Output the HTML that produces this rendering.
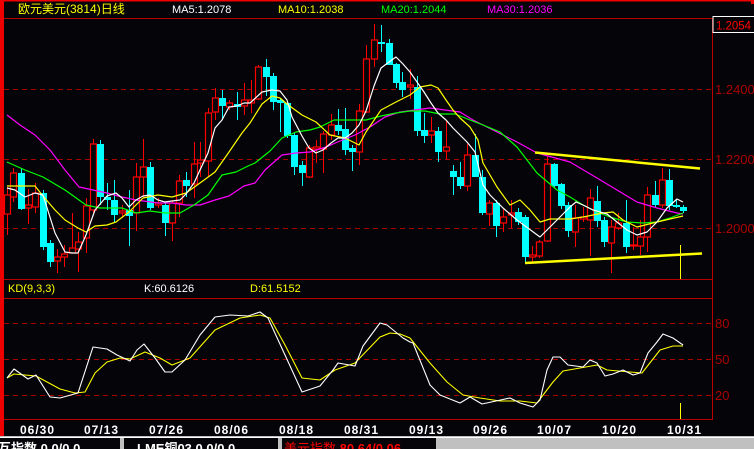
<!DOCTYPE html>
<html><head><meta charset="utf-8"><style>
html,body{margin:0;padding:0;background:#050408;width:754px;height:449px;overflow:hidden}
svg{display:block}
text{font-family:"Liberation Sans","Noto Sans CJK SC",sans-serif}
</style></head><body>
<svg width="754" height="449" viewBox="0 0 754 449" xmlns="http://www.w3.org/2000/svg">
<rect width="754" height="449" fill="#050408"/>
<rect x="0" y="0" width="754" height="1.5" fill="#e00"/>
<rect x="0" y="0" width="4" height="437" fill="#e00"/>
<rect x="751" y="0" width="3" height="4" fill="#e00"/>
<line x1="4" y1="18.5" x2="754" y2="18.5" stroke="#b00" stroke-width="1"/>
<line x1="712.5" y1="18" x2="712.5" y2="420" stroke="#b00"/>
<line x1="4" y1="279.5" x2="712" y2="279.5" stroke="#b00"/>
<line x1="4" y1="298.5" x2="712" y2="298.5" stroke="#b00"/>
<line x1="4" y1="419.5" x2="712" y2="419.5" stroke="#b00"/>
<text x="18" y="13" font-size="12" fill="#ff0">欧元美元(3814)日线</text>
<text x="172" y="13" font-size="11" fill="#fff">MA5:1.2078</text>
<text x="278" y="13" font-size="11" fill="#ff0">MA10:1.2038</text>
<text x="381" y="13" font-size="11" fill="#0f0">MA20:1.2044</text>
<text x="487" y="13" font-size="11" fill="#f0f">MA30:1.2036</text>
<rect x="713" y="16.5" width="42" height="16" fill="#050408" stroke="#fff" stroke-width="1"/>
<text x="716" y="29.5" font-size="12" fill="#f00" textLength="35" lengthAdjust="spacingAndGlyphs">1.2054</text>
<g stroke="#a00" stroke-dasharray="5,4" stroke-width="1">
<line x1="4" y1="89.5" x2="712" y2="89.5"/>
<line x1="4" y1="159.5" x2="712" y2="159.5"/>
<line x1="4" y1="228.5" x2="712" y2="228.5"/>
<line x1="4" y1="323.5" x2="712" y2="323.5"/>
<line x1="4" y1="359.5" x2="712" y2="359.5"/>
<line x1="4" y1="395.5" x2="712" y2="395.5"/>
</g>
<g font-size="13" fill="#a00">
<text x="715" y="94">1.2400</text>
<text x="715" y="164">1.2200</text>
<text x="715" y="233">1.2000</text>
<text x="715" y="328">80</text>
<text x="715" y="364">50</text>
<text x="715" y="400">20</text>
</g>
<path stroke="#f00" stroke-width="1" fill="none" d="M7.5 187V235M13.5 168V202M28.5 189V224M35.5 183V213M57.5 249V273M64.5 245V267M72.5 213V253M78.5 232V272M86.5 198V253M93.5 139V213M122.5 205V218M136.5 163V231M143.5 139V197M158.5 198V208M172.5 200V241M179.5 175V217M194.5 142V198M200.5 142V177M208.5 108V177M215.5 88V120M229.5 100V110M244.5 83V115M251.5 80V113M258.5 65V100M309.5 145V178M316.5 140V163M323.5 131V173M331.5 114V140M359.5 104V165M366.5 45V113M374.5 24V67M410.5 69V99M431.5 117V143M446.5 120V159M467.5 144V191M489.5 200V226M503.5 208V232M511.5 200V228M532.5 246V262M539.5 240V258M547.5 156V242M575.5 205V247M583.5 207V222M590.5 189V256M611.5 220V273M618.5 213V230M633.5 227V250M640.5 220V255M647.5 187V252M662.5 168V208"/>
<path stroke="#0ff" stroke-width="1" fill="none" d="M21.5 168V210M43.5 190V250M50.5 240V267M100.5 140V205M107.5 183V210M114.5 180V222M129.5 190V246M150.5 162V210M165.5 202V236M186.5 172V197M222.5 90V120M237.5 92V120M266.5 59V96M273.5 73V110M280.5 98V132M287.5 102V138M294.5 133V175M302.5 161V186M338.5 109V135M345.5 108V155M352.5 145V171M381.5 25V52M389.5 39V65M396.5 63V88M402.5 72V97M417.5 76V136M424.5 113V143M438.5 127V162M453.5 165V195M460.5 162V189M475.5 134V177M482.5 170V215M496.5 200V237M518.5 208V225M525.5 215V263M554.5 163V188M561.5 183V209M568.5 202V237M597.5 186V227M604.5 217V247M626.5 200V253M655.5 181V208M669.5 169V210M676.5 200V208M683.5 205V213"/>
<g stroke="#f00" stroke-width="1.2" fill="#050408">
<rect x="4.5" y="195" width="6" height="19"/><rect x="10.5" y="173" width="6" height="24"/><rect x="25.5" y="205" width="6" height="3"/><rect x="32.5" y="193" width="6" height="14"/><rect x="54.5" y="257" width="6" height="4"/><rect x="61.5" y="254" width="6" height="3"/><rect x="69.5" y="248" width="6" height="5"/><rect x="75.5" y="242" width="6" height="7"/><rect x="83.5" y="206" width="6" height="32"/><rect x="90.5" y="144" width="6" height="66"/><rect x="119.5" y="211" width="6" height="2"/><rect x="133.5" y="177" width="6" height="36"/><rect x="140.5" y="167" width="6" height="10"/><rect x="155.5" y="203" width="6" height="2"/><rect x="169.5" y="203" width="6" height="20"/><rect x="176.5" y="181" width="6" height="22"/><rect x="191.5" y="164" width="6" height="20"/><rect x="197.5" y="160" width="6" height="3"/><rect x="205.5" y="113" width="6" height="48"/><rect x="212.5" y="98" width="6" height="14"/><rect x="226.5" y="103" width="6" height="4"/><rect x="241.5" y="100" width="6" height="6"/><rect x="248.5" y="100" width="6" height="3"/><rect x="255.5" y="67" width="6" height="32"/><rect x="306.5" y="148" width="6" height="29"/><rect x="313.5" y="147" width="6" height="2"/><rect x="320.5" y="134" width="6" height="15"/><rect x="328.5" y="125" width="6" height="10"/><rect x="356.5" y="111" width="6" height="41"/><rect x="363.5" y="59" width="6" height="53"/><rect x="371.5" y="40" width="6" height="19"/><rect x="407.5" y="85" width="6" height="2"/><rect x="428.5" y="131" width="6" height="4"/><rect x="443.5" y="147" width="6" height="4"/><rect x="464.5" y="155" width="6" height="31"/><rect x="486.5" y="203" width="6" height="11"/><rect x="500.5" y="217" width="6" height="6"/><rect x="508.5" y="213" width="6" height="2"/><rect x="529.5" y="255" width="6" height="2"/><rect x="536.5" y="242" width="6" height="14"/><rect x="544.5" y="164" width="6" height="77"/><rect x="572.5" y="218" width="6" height="14"/><rect x="580.5" y="217" width="6" height="2"/><rect x="587.5" y="198" width="6" height="22"/><rect x="608.5" y="227" width="6" height="16"/><rect x="615.5" y="223" width="6" height="5"/><rect x="630.5" y="245" width="6" height="1"/><rect x="637.5" y="237" width="6" height="9"/><rect x="644.5" y="195" width="6" height="42"/><rect x="659.5" y="180" width="6" height="25"/>
</g>
<g fill="#0ff">
<rect x="18" y="173" width="7" height="36"/><rect x="40" y="193" width="7" height="54"/><rect x="47" y="243" width="7" height="19"/><rect x="97" y="144" width="7" height="53"/><rect x="104" y="197" width="7" height="3"/><rect x="111" y="200" width="7" height="15"/><rect x="126" y="210" width="7" height="6"/><rect x="147" y="167" width="7" height="41"/><rect x="162" y="205" width="7" height="18"/><rect x="183" y="180" width="7" height="6"/><rect x="219" y="98" width="7" height="8"/><rect x="234" y="104" width="7" height="3"/><rect x="263" y="67" width="7" height="10"/><rect x="270" y="76" width="7" height="26"/><rect x="277" y="100" width="7" height="3"/><rect x="284" y="103" width="7" height="33"/><rect x="291" y="135" width="7" height="32"/><rect x="299" y="165" width="7" height="8"/><rect x="335" y="125" width="7" height="6"/><rect x="342" y="129" width="7" height="21"/><rect x="349" y="148" width="7" height="4"/><rect x="378" y="42" width="7" height="2"/><rect x="386" y="43" width="7" height="22"/><rect x="393" y="64" width="7" height="19"/><rect x="399" y="82" width="7" height="8"/><rect x="414" y="87" width="7" height="44"/><rect x="421" y="130" width="7" height="6"/><rect x="435" y="131" width="7" height="21"/><rect x="450" y="171" width="7" height="6"/><rect x="457" y="177" width="7" height="9"/><rect x="472" y="155" width="7" height="22"/><rect x="479" y="177" width="7" height="36"/><rect x="493" y="203" width="7" height="23"/><rect x="515" y="212" width="7" height="10"/><rect x="522" y="217" width="7" height="40"/><rect x="551" y="164" width="7" height="22"/><rect x="558" y="184" width="7" height="22"/><rect x="565" y="205" width="7" height="26"/><rect x="594" y="201" width="7" height="20"/><rect x="601" y="220" width="7" height="22"/><rect x="623" y="223" width="7" height="24"/><rect x="652" y="195" width="7" height="10"/><rect x="666" y="180" width="7" height="26"/><rect x="673" y="205" width="7" height="2"/><rect x="680" y="207" width="7" height="4"/>
</g>
<g fill="none" stroke-width="1.2" stroke-linejoin="round">
<polyline stroke="#f0f" points="7,115 20,125 35,135 50,150 65,170 79,187 93,190 107,193 122,197 136,200 158,203 172,203 186,205 200,205 215,200 229,196 244,186 255,183 265,170 282,155 296,153 310,152 326,147 340,141 355,135 370,127 385,117 400,112 415,110 430,108 445,110 460,112 473,120 497,132 517,142 537,153 570,162 597,178 617,190 637,202 657,208 677,213 683,214"/>
<polyline stroke="#0f0" points="7,162 25,170 43,177 65,190 86,205 100,208 122,208 136,213 150,211 165,213 180,213 194,205 208,195 222,175 236,172 248,166 255,163 270,151 282,138 296,132 310,130 320,127 334,120 352,120 366,120 381,116 396,113 410,111 425,111 440,114 455,114 470,120 483,125 500,132 517,147 537,173 557,190 570,197 583,205 597,212 610,217 627,222 643,223 657,222 670,218 683,213"/>
<polyline stroke="#ff0" points="7,186 35,186 43,196 55,210 65,220 78,228 86,232 95,226 107,225 116,222 129,212 143,198 158,195 172,197 186,193 200,183 215,172 229,152 242,133 250,123 262,104 272,96 280,98 287,104 302,115 316,122 330,135 345,138 359,145 366,132 381,110 396,102 410,95 420,87 431,85 438,88 446,100 453,110 460,118 470,127 478,140 483,163 497,187 510,205 520,200 530,210 540,222 550,219 570,219 583,217 603,213 613,212 623,220 637,227 657,222 670,219 683,216"/>
<polyline stroke="#fff" points="7,188 15,190 25,197 35,193 43,195 55,233 65,252 72,253 78,253 86,235 95,210 107,196 116,193 122,198 129,207 136,200 143,196 150,195 158,200 165,202 172,201 180,200 186,194 194,183 200,170 208,153 215,128 222,120 229,107 237,106 244,103 250,103 262,92 272,90 280,91 287,100 292,117 302,136 309,148 316,153 323,150 331,143 338,138 345,138 352,133 359,125 366,111 374,86 381,68 389,62 396,57 403,64 410,72 417,82 424,92 431,103 438,113 446,120 453,128 460,135 467,142 475,152 483,185 490,195 503,208 517,220 540,237 550,227 560,217 570,207 576,202 583,205 593,210 607,214 627,230 637,235 647,232 657,222 667,208 677,199 683,202"/>
</g>
<g stroke="#ff0" stroke-width="2.5" fill="none">
<line x1="535" y1="152.5" x2="700" y2="168.5"/>
<line x1="525" y1="263" x2="702" y2="253.5"/>
</g>
<line x1="680.5" y1="245" x2="680.5" y2="279" stroke="#ff0"/>
<line x1="680.5" y1="403" x2="680.5" y2="419" stroke="#ff0"/>
<text x="8" y="292" font-size="11" fill="#ff0">KD(9,3,3)</text>
<text x="144" y="292" font-size="11" fill="#fff">K:60.6126</text>
<text x="250" y="292" font-size="11" fill="#ff0">D:61.5152</text>
<g fill="none" stroke-width="1.1" stroke-linejoin="round">
<polyline stroke="#ff0" points="7,378 14,374 36,376 60,389 75,393 85,392 95,373 107,362 120,358 130,359 145,352 160,358 172,365 190,358 215,330 240,318 260,315 270,318 285,345 302,378 320,380 335,370 355,363 380,337 390,333 400,334 410,338 430,363 447,382 463,395 480,398 500,401 520,401 537,403 553,382 563,371 580,368 597,365 607,370 630,372 642,373 660,350 673,346 683,346"/>
<polyline stroke="#fff" points="7,378 14,369 28,379 36,375 50,397 60,398 78,393 93,347 107,349 117,355 130,361 137,350 144,344 155,358 165,372 172,372 185,360 200,335 215,317 230,315 248,316 260,312 268,318 285,355 302,392 320,386 333,370 338,363 355,366 363,346 380,323 387,325 403,338 410,342 413,343 430,385 440,395 460,403 470,397 482,404 510,398 520,403 533,407 540,400 547,370 553,357 560,357 568,365 583,367 590,360 597,363 605,376 613,374 623,370 633,375 640,373 648,353 657,342 663,334 673,338 683,345"/>
</g>
<g font-size="12" font-weight="bold" fill="#fff" letter-spacing="1">
<text x="20" y="434">06/30</text><text x="84" y="434">07/13</text><text x="149" y="434">07/26</text><text x="214" y="434">08/06</text><text x="279" y="434">08/18</text><text x="344" y="434">08/31</text><text x="409" y="434">09/13</text><text x="473" y="434">09/26</text><text x="537" y="434">10/07</text><text x="602" y="434">10/20</text><text x="667" y="434">10/31</text>
</g>
<rect x="0" y="436" width="754" height="13" fill="#c0c0c0"/>
<rect x="0" y="437" width="754" height="1" fill="#fff"/>
<rect x="0" y="438" width="120" height="11" fill="#050408"/>
<rect x="124" y="438" width="154" height="11" fill="#050408"/>
<rect x="282" y="438" width="154" height="11" fill="#050408"/>
<text x="-2" y="453" font-size="13" font-weight="bold" fill="#fff">互指数  0.0/0.0</text>
<text x="137" y="453" font-size="13" font-weight="bold" fill="#fff">LME铜03   0.0/0.0</text>
<text x="284" y="453" font-size="13" fill="#f00">美元指数  <tspan font-weight="bold">80.64/0.06</tspan></text>
</svg>
</body></html>
